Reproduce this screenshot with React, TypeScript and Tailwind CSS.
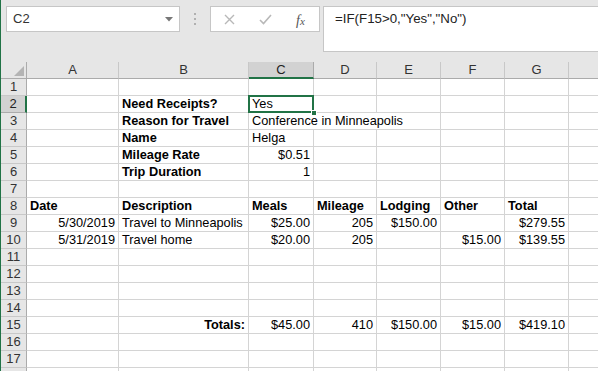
import React from 'react';

type Cell = { t: string; b?: boolean; r?: boolean };
const COLS = ['A', 'B', 'C', 'D', 'E', 'F', 'G', 'H'];

const data: Record<number, Record<string, Cell>> = {
  2: { B: { t: 'Need Receipts?', b: true }, C: { t: 'Yes' } },
  3: { B: { t: 'Reason for Travel', b: true }, C: { t: 'Conference in Minneapolis' } },
  4: { B: { t: 'Name', b: true }, C: { t: 'Helga' } },
  5: { B: { t: 'Mileage Rate', b: true }, C: { t: '$0.51', r: true } },
  6: { B: { t: 'Trip Duration', b: true }, C: { t: '1', r: true } },
  8: {
    A: { t: 'Date', b: true },
    B: { t: 'Description', b: true },
    C: { t: 'Meals', b: true },
    D: { t: 'Mileage', b: true },
    E: { t: 'Lodging', b: true },
    F: { t: 'Other', b: true },
    G: { t: 'Total', b: true },
  },
  9: {
    A: { t: '5/30/2019', r: true },
    B: { t: 'Travel to Minneapolis' },
    C: { t: '$25.00', r: true },
    D: { t: '205', r: true },
    E: { t: '$150.00', r: true },
    G: { t: '$279.55', r: true },
  },
  10: {
    A: { t: '5/31/2019', r: true },
    B: { t: 'Travel home' },
    C: { t: '$20.00', r: true },
    D: { t: '205', r: true },
    F: { t: '$15.00', r: true },
    G: { t: '$139.55', r: true },
  },
  15: {
    B: { t: 'Totals:', b: true, r: true },
    C: { t: '$45.00', r: true },
    D: { t: '410', r: true },
    E: { t: '$150.00', r: true },
    F: { t: '$15.00', r: true },
    G: { t: '$419.10', r: true },
  },
};

function DataCell({ c, children, span, visible }: { c?: Cell; children?: React.ReactNode; span?: boolean; visible?: boolean }) {
  return (
    <div
      className={`relative h-[17px] border-r border-b border-[#d4d4d4] bg-white text-[12.75px] leading-[16px] text-black whitespace-nowrap px-[3px] ${
        c?.r ? 'text-right' : 'text-left'
      } ${c?.b ? 'font-bold' : ''} ${span ? 'col-span-3' : ''} ${span || visible ? 'overflow-visible' : 'overflow-hidden'}`}
    >
      {c?.t}
      {children}
    </div>
  );
}

export default function App() {
  const rows = Array.from({ length: 18 }, (_, i) => i + 1);
  return (
    <div className="relative w-[598px] h-[371px] overflow-hidden bg-[#e6e6e6] border-l border-[#217346] font-['Liberation_Sans',Arial,sans-serif]">
      {/* Toolbar */}
      <div className="flex items-start h-[62px] pt-[6px] pl-[5px]">
        <div className="relative shrink-0 w-[174px] h-[26px] bg-white border border-[#c6c6c6] flex items-center pl-[6px] text-[13px] text-[#333]">
          C2
          <svg className="absolute right-[6px] top-[10px]" width="8" height="5" viewBox="0 0 8 5">
            <path d="M0 0 H8 L4 4.5 Z" fill="#777" />
          </svg>
        </div>
        <div className="shrink-0 w-[30px] h-[26px] flex flex-col items-center justify-center gap-[3px]">
          <div className="w-[2px] h-[2px] bg-[#b0b0b0]" />
          <div className="w-[2px] h-[2px] bg-[#b0b0b0]" />
          <div className="w-[2px] h-[2px] bg-[#b0b0b0]" />
        </div>
        <div className="relative shrink-0 w-[110px] h-[26px] bg-white border border-[#c6c6c6]">
          <svg className="absolute left-[13px] top-[7px]" width="11" height="11" viewBox="0 0 11 11">
            <path d="M1 1 L10 10 M10 1 L1 10" stroke="#b8b8b8" strokeWidth="1.4" />
          </svg>
          <svg className="absolute left-[48px] top-[7px]" width="13" height="11" viewBox="0 0 13 11">
            <path d="M1 6 L4.5 9.5 L12 1" stroke="#b8b8b8" strokeWidth="1.6" fill="none" />
          </svg>
          <span className="absolute left-[85px] top-[3px] font-['Liberation_Serif',serif] italic text-[14px] text-[#555]">
            f<span className="text-[11px]">x</span>
          </span>
        </div>
        <div className="shrink-0 ml-[3px] w-[290px] h-[46px] bg-white border border-[#c6c6c6] pl-[11px] pt-[4px] text-[13.3px] text-[#222] leading-[16px] whitespace-nowrap">
          =IF(F15&gt;0,"Yes","No")
        </div>
      </div>

      {/* Grid */}
      <div className="grid w-[640px] grid-cols-[26px_92px_130px_65px_63px_64px_64px_64px_72px]">
        {/* header row */}
        <div className="relative h-[17px] border-r border-b border-[#ababab] bg-[#e6e6e6]">
          <svg className="absolute right-[2px] bottom-[2px]" width="10" height="10" viewBox="0 0 10 10">
            <path d="M10 0 L10 10 L0 10 Z" fill="#b4b4b4" />
          </svg>
        </div>
        {COLS.map((c) => (
          <div
            key={c}
            className={`h-[17px] border-b border-r text-center text-[13px] leading-[16px] ${
              c === 'C'
                ? 'bg-[#d2d2d2] text-[#222] border-b-2 border-b-[#217346] border-r-[#ababab]'
                : 'bg-[#e6e6e6] text-[#333] border-b-[#ababab] border-r-[#c8c8c8]'
            }`}
          >
            {c}
          </div>
        ))}
        {rows.map((r) => {
          const rowData = data[r] || {};
          const cells: React.ReactNode[] = [];
          cells.push(
            <div
              key={`h${r}`}
              className={`h-[17px] border-b text-center text-[13px] leading-[16px] ${
                r === 2
                  ? 'bg-[#d2d2d2] text-[#222] border-r-2 border-r-[#217346] border-b-[#ababab]'
                  : 'bg-[#e6e6e6] text-[#333] border-r border-r-[#ababab] border-b-[#c8c8c8]'
              }`}
            >
              {r <= 17 ? r : ''}
            </div>
          );
          for (let i = 0; i < COLS.length; i++) {
            const col = COLS[i];
            if (r === 3 && col === 'C') {
              cells.push(<DataCell key={`${r}${col}`} c={rowData[col]} span />);
              i += 2;
              continue;
            }
            if (r === 2 && col === 'C') {
              cells.push(
                <DataCell key={`${r}${col}`} c={rowData[col]} visible>
                  <div className="absolute left-[-1px] top-[-1px] right-[-1px] bottom-[-1px] border-2 border-[#217346] pointer-events-none z-20" />
                  <div className="absolute right-[-4px] bottom-[-4px] w-[6px] h-[6px] bg-[#217346] border border-white z-30" />
                </DataCell>
              );
              continue;
            }
            cells.push(<DataCell key={`${r}${col}`} c={rowData[col]} />);
          }
          return <React.Fragment key={r}>{cells}</React.Fragment>;
        })}
      </div>
    </div>
  );
}
